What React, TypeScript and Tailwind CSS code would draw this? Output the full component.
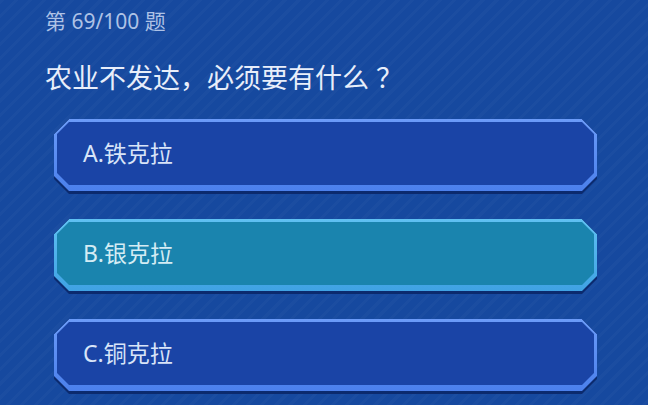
import React from 'react';

const options = [
    { label: 'A.铁克拉', active: false },
    { label: 'B.银克拉', active: true },
    { label: 'C.铜克拉', active: false },
];

const Option = ({ label, active }: { label: string; active: boolean }) => (
    // shadow layer
    <div className="h-[75px] w-[543px] bg-[#0b2a6e] pb-[3px] [clip-path:polygon(15px_0,calc(100%_-_15px)_0,100%_15px,100%_calc(100%_-_15px),calc(100%_-_15px)_100%,15px_100%,0_calc(100%_-_15px),0_15px)]">
        {/* bevel / border */}
        <div
            className={
                active
                    ? "h-full w-full bg-gradient-to-b from-[#5fc0f2] to-[#3fa2e4] px-[3px] pt-[3px] pb-[6px] [clip-path:polygon(15px_0,calc(100%_-_15px)_0,100%_15px,100%_calc(100%_-_15px),calc(100%_-_15px)_100%,15px_100%,0_calc(100%_-_15px),0_15px)]"
                    : "h-full w-full bg-gradient-to-b from-[#6b9bf8] to-[#4b80ec] px-[3px] pt-[3px] pb-[6px] [clip-path:polygon(15px_0,calc(100%_-_15px)_0,100%_15px,100%_calc(100%_-_15px),calc(100%_-_15px)_100%,15px_100%,0_calc(100%_-_15px),0_15px)]"
            }
        >
            {/* fill */}
            <div
                className={
                    active
                        ? "flex h-full w-full items-center bg-[#1a84ae] pl-[26px] [clip-path:polygon(12px_0,calc(100%_-_12px)_0,100%_12px,100%_calc(100%_-_12px),calc(100%_-_12px)_100%,12px_100%,0_calc(100%_-_12px),0_12px)]"
                        : "flex h-full w-full items-center bg-[#1a44a6] pl-[26px] [clip-path:polygon(12px_0,calc(100%_-_12px)_0,100%_12px,100%_calc(100%_-_12px),calc(100%_-_12px)_100%,12px_100%,0_calc(100%_-_12px),0_12px)]"
                }
            >
                <span className={active ? "text-[23px] leading-none text-[#d4ecf4]" : "text-[23px] leading-none text-[#d8e4f8]"}>
                    {label}
                </span>
            </div>
        </div>
    </div>
);

export default function App() {
    return (
        <div
            className="flex h-[405px] w-[648px] flex-col overflow-hidden bg-[#16499f] bg-[repeating-linear-gradient(135deg,rgba(255,255,255,0.025)_0px,rgba(255,255,255,0.025)_3px,transparent_3px,transparent_10px)] pl-[45px]"
            style={{ fontFamily: '"Noto Sans", "Noto Sans CJK SC", sans-serif' }}
        >
            {/* Progress */}
            <div className="mt-[6px] h-[30px] text-[21px] leading-[30px] text-[#aec2e6]">第 69/100 题</div>

            {/* Question */}
            <div
                className="mt-[23px] h-[36px] text-[27px] leading-[36px] text-[#e8eefa]"
                style={{ fontFamily: '"Noto Sans CJK SC", sans-serif' }}
            >
                农业不发达，必须要有什么<span className="ml-[7px]">？</span>
            </div>

            {/* Options */}
            <div className="mt-[24px] ml-[9px] flex flex-col gap-[25px]">
                {options.map((o) => (
                    <Option key={o.label} label={o.label} active={o.active} />
                ))}
            </div>
        </div>
    );
}
